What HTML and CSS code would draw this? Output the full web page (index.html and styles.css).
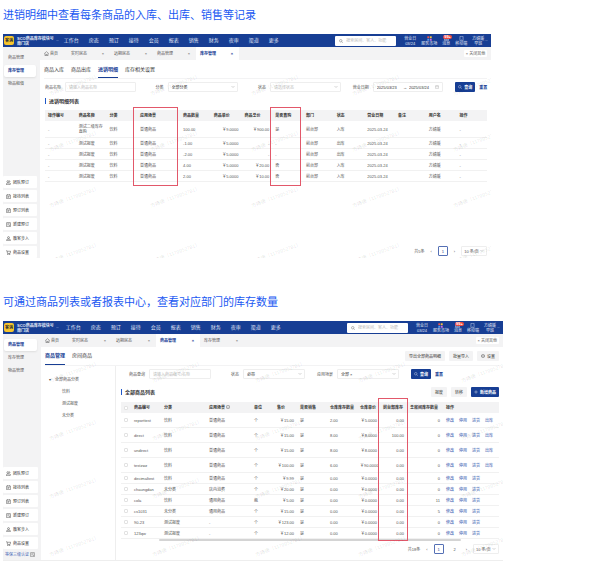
FILE: index.html
```
<!DOCTYPE html>
<html lang="zh-CN">
<head>
    <meta charset="UTF-8">
    <meta name="viewport" content="width=device-width, initial-scale=1.0">
    <title>库存管理</title>
    <link rel="stylesheet" href="styles.css">
</head>
<body>
    <!-- Icons shared by both panels -->
    <svg class="sprite" aria-hidden="true">
        <symbol id="i-search" viewBox="0 0 16 16"><circle cx="7" cy="7" r="5"/><path d="M11 11l4 4"/></symbol>
        <symbol id="i-down" viewBox="0 0 16 16"><path d="M3 6l5 5 5-5"/></symbol>
        <symbol id="i-home" viewBox="0 0 16 16"><path d="M1 8l7-6 7 6M3 7v8h10V7M6 15v-4h4v4"/></symbol>
        <symbol id="i-team" viewBox="0 0 16 16"><circle cx="6" cy="5" r="3"/><path d="M1 15v-3l3-2h4l3 2v3zM10 2l3 2-2 4M12 9l3 3v3"/></symbol>
        <symbol id="i-list" viewBox="0 0 16 16"><path d="M2 3h12v12H2zM5 1v3M11 1v3M5 8h6M5 11h4"/></symbol>
        <symbol id="i-order" viewBox="0 0 16 16"><path d="M2 2h12v13H2zM5 6h6M5 9h3M9 11l2 1 2-3"/></symbol>
        <symbol id="i-user" viewBox="0 0 16 16"><circle cx="8" cy="5" r="3"/><path d="M1 14l3-4h8l3 4z"/></symbol>
        <symbol id="i-cart" viewBox="0 0 16 16"><path d="M1 2h2l2 9h8l2-7H4"/><circle cx="6" cy="14" r="1"/><circle cx="12" cy="14" r="1"/></symbol>
        <symbol id="i-date" viewBox="0 0 16 16"><path d="M2 3h12v11H2zM2 7h12M5 1v3M11 1v3"/></symbol>
        <symbol id="i-mail" viewBox="0 0 16 16"><path d="M1 3h14v11H1zM1 10h4l1 2h4l1-2h4"/></symbol>
        <symbol id="i-phone" viewBox="0 0 16 16"><path d="M3 1h10v14H3zM7 12h2"/></symbol>
        <symbol id="i-gear" viewBox="0 0 16 16"><path d="M8 1l6 3v8l-6 3-6-3V4z"/><circle cx="8" cy="8" r="2"/></symbol>
        <symbol id="i-info" viewBox="0 0 16 16"><circle cx="8" cy="8" r="7"/><path d="M8 7v5M8 4v1"/></symbol>
        <symbol id="i-plus" viewBox="0 0 16 16"><path d="M8 1v14M1 8h14"/></symbol>
        <symbol id="i-apps" viewBox="0 0 16 16"><path class="app-red" d="M1 1h6v6H1z"/><path class="app-yellow" d="M9 1h6v6H9z"/><path class="app-blue" d="M1 9h6v6H1z"/><path class="app-pink" d="M9 9h6v6H9z"/></symbol>
    </svg>

    <h2 class="title">进销明细中查看每条商品的入库、出库、销售等记录</h2>

    <section class="panel panel-stock">
        <header class="topbar">
            <span class="logo">客满</span>
            <span class="store">SCO商品库存模块号<br>南门店</span>
            <svg class="icon store-arrow"><use href="#i-down"/></svg>
            <nav class="menu"></nav>
            <label class="search"><svg class="icon"><use href="#i-search"/></svg><input type="text" aria-label="搜索" placeholder="搜索房间、客人、功能"></label>
            <div class="tools">
                <span class="tool">营业日<br>03/24</span>
                <span class="tool"><svg class="icon apps"><use href="#i-apps"/></svg>服务市场</span>
                <span class="tool"><svg class="icon"><use href="#i-mail"/></svg>消息<b class="badge">99+</b></span>
                <span class="tool"><svg class="icon"><use href="#i-phone"/></svg>移动端</span>
                <span class="tool">方婧媛<br>早班</span>
                <svg class="icon"><use href="#i-down"/></svg>
            </div>
        </header>
        <div class="body">
            <aside class="sidebar">
                <a class="side-link" href="#">商品管理</a>
                <a class="side-link active" href="#">库存管理</a>
                <a class="side-link" href="#">物品租借</a>
                <div class="shortcuts"></div>
            </aside>
            <main class="main">
                <div class="tabs">
                    <a class="home" href="#"><svg class="icon"><use href="#i-home"/></svg>首页</a>
                    <a class="tab" href="#">实时房态<i>×</i></a>
                    <a class="tab" href="#">远期房态<i>×</i></a>
                    <a class="tab" href="#">商品管理<i>×</i></a>
                    <a class="tab active" href="#">库存管理<i>×</i></a>
                    <button class="close-others">× 关闭其他</button>
                </div>
                <div class="subtabs">
                    <a href="#">商品入库</a>
                    <a href="#">商品出库</a>
                    <a class="active" href="#">进销明细</a>
                    <a href="#">库存相关设置</a>
                </div>
                <div class="content">
                    <form class="filters">
                        <label class="field wide">商品名称<input type="text" placeholder="请输入商品名称"></label>
                        <label class="field wide">分类<select><option>全部分类</option></select></label>
                        <label class="field">状态<select class="empty"><option>请选择状态</option></select></label>
                        <div class="field">
                            <label for="dateFrom">营业日期</label>
                            <span class="range">
                                <input type="text" id="dateFrom" value="2025/03/23">
                                <span>→</span>
                                <input type="text" aria-label="结束日期" value="2025/03/24">
                                <svg class="icon"><use href="#i-date"/></svg>
                            </span>
                        </div>
                        <div class="actions">
                            <button type="button" class="btn primary"><svg class="icon"><use href="#i-search"/></svg>查询</button>
                            <button type="reset" class="link">重置</button>
                        </div>
                    </form>
                    <div class="section-head"><h3>进销明细列表</h3></div>
                    <div class="table-wrap">
                        <table class="stock-table">
                            <thead>
                                <tr><th>操作编号</th><th>商品名称</th><th>分类</th><th class="wide">应用场景</th><th>商品数量</th><th>商品单价</th><th>商品总价</th><th>是否直购</th><th>部门</th><th>状态</th><th>营业日期</th><th>备注</th><th>用户名</th><th>操作</th></tr>
                            </thead>
                            <tbody id="stockRows"></tbody>
                        </table>
                        <div class="mark mark-scene"></div>
                        <div class="mark mark-direct"></div>
                    </div>
                    <div class="pager">
                        <span>共5条</span>
                        <button class="arrow">‹</button>
                        <button class="page active">1</button>
                        <button class="arrow">›</button>
                        <select aria-label="每页条数"><option>10 条/页</option></select>
                    </div>
                </div>
            </main>
        </div>
        <div class="watermark" aria-hidden="true"></div>
    </section>

    <h2 class="title">可通过商品列表或者报表中心，查看对应部门的库存数量</h2>

    <section class="panel panel-goods">
        <header class="topbar">
            <span class="logo">客满</span>
            <span class="store">SCO商品库存模块号<br>南门店</span>
            <svg class="icon store-arrow"><use href="#i-down"/></svg>
            <nav class="menu"></nav>
            <label class="search"><svg class="icon"><use href="#i-search"/></svg><input type="text" aria-label="搜索" placeholder="搜索房间、客人、功能"></label>
            <div class="tools">
                <span class="tool">营业日<br>03/24</span>
                <span class="tool"><svg class="icon apps"><use href="#i-apps"/></svg>服务市场</span>
                <span class="tool"><svg class="icon"><use href="#i-mail"/></svg>消息<b class="badge">99+</b></span>
                <span class="tool"><svg class="icon"><use href="#i-phone"/></svg>移动端</span>
                <span class="tool">方婧媛<br>早班</span>
                <svg class="icon"><use href="#i-down"/></svg>
            </div>
        </header>
        <div class="body">
            <aside class="sidebar">
                <a class="side-link active" href="#">商品管理</a>
                <a class="side-link" href="#">库存管理</a>
                <a class="side-link" href="#">物品管理</a>
                <div class="shortcuts"></div>
                <a class="cert" href="#">等保三级认证 <svg class="icon"><use href="#i-order"/></svg></a>
            </aside>
            <main class="main">
                <div class="tabs">
                    <a class="home" href="#"><svg class="icon"><use href="#i-home"/></svg>首页</a>
                    <a class="tab" href="#">实时房态<i>×</i></a>
                    <a class="tab" href="#">远期房态<i>×</i></a>
                    <a class="tab active" href="#">商品管理<i>×</i></a>
                    <a class="tab" href="#">库存管理<i>×</i></a>
                    <button class="close-others">× 关闭其他</button>
                </div>
                <div class="subtabs">
                    <a class="active" href="#">商品管理</a>
                    <a href="#">房间商品</a>
                    <div class="head-actions">
                        <button class="btn">导出全部商品明细</button>
                        <button class="btn">批量导入</button>
                        <button class="btn"><svg class="icon"><use href="#i-gear"/></svg>设置</button>
                    </div>
                </div>
                <div class="split">
                    <ul class="tree">
                        <li class="root">全部商品分类</li>
                        <li>饮料</li>
                        <li>测试报废</li>
                        <li>未分类</li>
                    </ul>
                    <div class="content">
                        <form class="filters">
                            <label class="field wide">商品查询<input type="text" placeholder="请输入商品编号/名称"></label>
                            <label class="field">状态<select><option>必带</option></select></label>
                            <label class="field">应用场景<select><option>全部 ×</option></select></label>
                            <div class="actions">
                                <button type="button" class="btn primary"><svg class="icon"><use href="#i-search"/></svg>查询</button>
                                <button type="reset" class="link">重置</button>
                            </div>
                        </form>
                        <div class="section-head">
                            <h3>全部商品列表</h3>
                            <button class="btn">报废</button>
                            <button class="btn">转移</button>
                            <button class="btn primary"><svg class="icon"><use href="#i-plus"/></svg>新增商品</button>
                        </div>
                        <div class="table-wrap">
                            <table class="goods-table">
                                <colgroup><col class="c-check"><col class="c-code"><col class="c-type"><col class="c-type"><col class="c-unit"><col class="c-unit"><col class="c-code"><col class="c-code"><col class="c-unit"><col class="c-dept"><col class="c-room"><col></colgroup>
                                <thead>
                                    <tr><th><input type="checkbox" aria-label="全选"></th><th>商品编号</th><th>分类</th><th>应用场景 <svg class="icon"><use href="#i-info"/></svg></th><th>单位</th><th>售价</th><th>是否销售</th><th>仓库库存数量</th><th>仓库单价</th><th>前台部库存</th><th>总房间库存数量</th><th>操作</th></tr>
                                </thead>
                                <tbody id="goodsRows"></tbody>
                            </table>
                            <div class="scrollbar"></div>
                            <div class="mark mark-dept"></div>
                        </div>
                        <div class="pager">
                            <span>共18条</span>
                            <button class="arrow">‹</button>
                            <button class="page active">1</button>
                            <button class="page">2</button>
                            <button class="arrow">›</button>
                            <select aria-label="每页条数"><option>10 条/页</option></select>
                        </div>
                    </div>
                </div>
            </main>
        </div>
        <div class="watermark" aria-hidden="true"></div>
    </section>

    <script>
        const menu = ['工作台', '房态', '预订', '接待', '会员', '报表', '销售', '财务', '夜审', '渠道', '更多'];

        const shortcuts = [
            ['i-team', '团队预订'],
            ['i-list', '接待列表'],
            ['i-list', '预订列表'],
            ['i-order', '新建预订'],
            ['i-user', '散客步入'],
            ['i-cart', '商品设置']
        ];

        const stock = [
            ['-', '测试二级库存直购', '饮料', '普通商品', '100.00', '￥9.0000', '￥900.00', '是', '前台部', '入库'],
            ['-', '测试报废', '饮料', '普通商品', '-1.00', '￥5.0000', '-', '-', '前台部', '出库'],
            ['-', '测试报废', '饮料', '普通商品', '-2.00', '￥5.0000', '-', '-', '前台部', '出库'],
            ['-', '测试报废', '饮料', '普通商品', '4.00', '￥5.0000', '￥20.00', '否', '前台部', '入库'],
            ['-', '测试报废', '饮料', '普通商品', '2.00', '￥5.0000', '￥10.00', '否', '前台部', '入库']
        ];

        const goods = [
            ['reporttest', '饮料', '普通商品', '个', '￥15.00', '是', '2.00', '￥5.0000', '0.00', '0'],
            ['direct', '饮料', '普通商品', '个', '￥15.00', '是', '8.00', '￥8.0000', '100.00', '0'],
            ['undirect', '饮料', '普通商品', '个', '￥15.00', '是', '8.00', '￥8.0000', '0.00', '0'],
            ['testzwz', '饮料', '普通商品', '个', '￥100.00', '是', '6.00', '￥90.0000', '0.00', '0'],
            ['decimaltest', '饮料', '普通商品', '个', '￥9.99', '是', '0.00', '￥0.0000', '0.00', '0'],
            ['chaungdan', '未分类', '店内消费', '个', '￥20.00', '是', '0.00', '￥0.0000', '0.00', '0'],
            ['cola', '饮料', '通用商品', '瓶', '￥5.00', '是', '0.00', '￥0.0000', '0.00', '11'],
            ['cs1031', '未分类', '通用商品', '个', '￥15.00', '是', '0.00', '￥0.0000', '0.00', '5'],
            ['90-23', '测试报废', '-', '个', '￥123.00', '是', '0.00', '￥0.0000', '0.00', '0'],
            ['123qw', '测试报废', '-', '个', '￥12.00', '是', '0.00', '￥0.0000', '0.00', '0']
        ];

        const cells = (row, right) => row.map((v, i) => `<td${right.includes(i) ? ' class="num"' : ''}>${v}</td>`).join('');

        document.querySelectorAll('.menu').forEach(el => {
            el.innerHTML = menu.map(m => `<a href="#">${m}</a>`).join('');
        });

        document.querySelectorAll('.shortcuts').forEach(el => {
            el.innerHTML = shortcuts.map(([icon, name]) =>
                `<a href="#"><svg class="icon"><use href="#${icon}"/></svg>${name}</a>`).join('');
        });

        document.querySelectorAll('.watermark').forEach(el => {
            el.innerHTML = '<span>方婧媛（1179952781）</span>'.repeat(20);
        });

        document.getElementById('stockRows').innerHTML = stock.map(row =>
            `<tr>${cells([...row, '2025-03-24', '', '方婧媛', '-'], [5, 6])}</tr>`).join('');

        // The first four goods can also be taken out of stock
        document.getElementById('goodsRows').innerHTML = goods.map((row, i) => {
            const links = ['修改', '停用', '进货'].concat(i < 4 ? ['出库'] : []);
            return `<tr${i < 4 ? ' class="tall"' : ''}><td><input type="checkbox" aria-label="${row[0]}"></td>` +
                cells(row, [4, 7, 8, 9]) +
                `<td><div class="ops">${links.map(l => `<a href="#">${l}</a>`).join('')}</div></td></tr>`;
        }).join('');
    </script>
</body>
</html>
```
FILE: styles.css
```
* {
    box-sizing: border-box;
}

body {
    margin: 0;
    padding: 8px 3px 0;
    background: #fff;
    color: #555;
    font: 4px/5px "Liberation Sans", "Noto Sans CJK SC", sans-serif;
}

a {
    color: inherit;
    text-decoration: none;
}

button,
input,
select {
    margin: 0;
    padding: 0;
    border: 0;
    background: none;
    color: inherit;
    font: inherit;
    min-width: 0;
}

.sprite {
    display: none;
}

.icon {
    width: 5px;
    height: 5px;
    flex: none;
    fill: none;
    stroke: currentColor;
    stroke-width: 1.5;
    vertical-align: top;
}

.title {
    margin: 0 0 12px;
    color: #1b59f2;
    font-size: 11px;
    line-height: 14px;
    font-weight: 400;
}

.panel {
    position: relative;
    display: flex;
    flex-direction: column;
    overflow: hidden;
}

.panel-stock {
    width: 82.6%;
    min-height: 224px;
    margin-bottom: 37px;
}

.panel-goods {
    width: 84.6%;
    min-height: 240px;
    border-bottom: 1px solid #eee;
}

/* Top bar */
.topbar {
    display: flex;
    align-items: center;
    height: 13px;
    padding: 0 3px 0 1px;
    background: #173e94;
    color: #e3e9f6;
}

.logo {
    width: 10px;
    height: 9px;
    margin-right: 3px;
    border-radius: 2px;
    background: #f7c52c;
    color: #333;
    font-weight: 700;
    line-height: 9px;
    text-align: center;
}

.store {
    white-space: nowrap;
    font-weight: 700;
}

.store-arrow {
    width: 3px;
    height: 3px;
    margin: 0 5px 0 2px;
}

.menu {
    display: flex;
    gap: 10px;
    font-size: 5px;
    white-space: nowrap;
}

.panel-goods .store-arrow {
    margin-right: 7px;
}

.search {
    display: flex;
    align-items: center;
    gap: 3px;
    width: 61px;
    height: 10px;
    margin-left: auto;
    padding: 0 4px;
    border-radius: 1px;
    background: #fff;
    color: #444;
}

.search .icon {
    width: 4px;
    height: 4px;
}

.search input {
    flex: 1;
}

::placeholder {
    color: #bbb;
    opacity: 1;
}

.tools {
    display: flex;
    align-items: center;
    gap: 5px;
    margin-left: 8px;
    white-space: nowrap;
}

.tools > .icon {
    width: 3px;
    height: 3px;
    margin-left: -4px;
}

.tool {
    position: relative;
    display: block;
    text-align: center;
}

.tool .icon {
    display: block;
    margin: 0 auto;
}

.apps {
    stroke: none;
}

.app-red { fill: #f0524b; }
.app-yellow { fill: #f8c53a; }
.app-blue { fill: #4c9cf5; }
.app-pink { fill: #d36be0; }

.badge {
    position: absolute;
    top: -1px;
    left: 1px;
    padding: 0 1px;
    border-radius: 2px;
    background: #f0483e;
    color: #fff;
    line-height: 4px;
}

/* Sidebar */
.body {
    display: flex;
    flex: 1;
}

.sidebar {
    display: flex;
    flex-direction: column;
    flex: none;
    width: 37px;
    padding-top: 5px;
    background: #f3f3f4;
}

.panel-goods .sidebar {
    width: 38px;
}

.side-link {
    margin: 0 4px 1px 1px;
    padding: 3px 0 4px 4px;
    border-radius: 2px;
}

.side-link.active {
    background: #fff;
    color: #173e94;
    font-weight: 700;
    box-shadow: 0 1px 2px #ddd;
}

.shortcuts {
    display: flex;
    flex-direction: column;
    gap: 2px;
    margin-top: auto;
}

.shortcuts a {
    display: flex;
    align-items: center;
    gap: 2px;
    height: 12px;
    margin-right: 3px;
    padding-left: 3px;
    border-radius: 1px;
    background: #fff;
    color: #333;
}

.cert {
    padding: 3px 2px 3px;
    color: #3d62b5;
    white-space: nowrap;
}

.cert .icon {
    color: #555;
}

/* Tabs */
.main {
    display: flex;
    flex-direction: column;
    flex: 1;
    min-width: 0;
}

.tabs {
    display: flex;
    align-items: stretch;
    height: 13px;
    padding-right: 4px;
    background: #f3f3f4;
}

.home {
    display: flex;
    align-items: center;
    gap: 1px;
    width: 27px;
    padding-left: 4px;
}

.tab {
    display: flex;
    align-items: center;
    justify-content: space-between;
    width: 43px;
    padding: 0 6px 0 4px;
}

.panel-goods .tab {
    width: 44px;
}

.tab i {
    font-style: normal;
}

.tab.active {
    background: #fff;
    color: #173e94;
    font-weight: 700;
}

.close-others {
    align-self: center;
    margin-left: auto;
    padding: 1px 2px;
    border-radius: 1px;
    background: #fff;
}

.subtabs {
    display: flex;
    align-items: stretch;
    gap: 7px;
    height: 19px;
    margin: 0 4px;
    border-bottom: 1px solid #f3f3f4;
    color: #333;
    font-size: 5px;
}

.subtabs a {
    padding-top: 7px;
}

.subtabs a.active {
    border-bottom: 1px solid #173e94;
    color: #173e94;
    font-weight: 700;
}

.panel-goods .subtabs a {
    padding-top: 6px;
}

.head-actions {
    display: flex;
    align-items: center;
    gap: 4px;
    margin-left: auto;
    font-size: 4px;
}

/* Content */
.content {
    display: flex;
    flex-direction: column;
    flex: 1;
    min-width: 0;
    padding: 3px 4px 2px 5px;
}

.filters {
    display: flex;
    align-items: center;
    gap: 12px;
}

.panel-goods .filters {
    padding: 0 56px 0 8px;
}

.field {
    display: flex;
    align-items: center;
    gap: 4px;
    flex: 1 1 auto;
    white-space: nowrap;
}

.field.wide {
    margin-right: 8px;
}

.field > input,
.field > select,
.range {
    flex: 1 1 0;
    width: 60px;
    height: 10px;
    padding: 0 3px;
    border: 1px solid #eee;
    border-radius: 1px;
    color: #333;
}

select {
    appearance: none;
    background: url("data:image/svg+xml,%3Csvg xmlns='http://www.w3.org/2000/svg' viewBox='0 0 8 8'%3E%3Cpath d='M1 2l3 3 3-3' fill='none' stroke='%23aaa'/%3E%3C/svg%3E") no-repeat right 2px center / 4px 4px;
}

.field > select.empty {
    color: #bbb;
}

.range {
    display: flex;
    align-items: center;
    gap: 2px;
}

.range input {
    flex: 1;
    width: 20px;
}

.range .icon {
    color: #aaa;
    width: 4px;
    height: 4px;
}

.actions {
    display: flex;
    gap: 4px;
}

.btn {
    display: flex;
    align-items: center;
    justify-content: center;
    gap: 2px;
    height: 10px;
    padding: 0 4px;
    border-radius: 1px;
    background: #f3f3f4;
    color: #333;
    white-space: nowrap;
}

.btn .icon {
    width: 4px;
    height: 4px;
}

.btn.primary {
    padding: 0 3px;
    background: #173e94;
    color: #fff;
    font-weight: 700;
}

.link {
    color: #173e94;
    font-weight: 700;
}

.section-head {
    display: flex;
    align-items: center;
    gap: 4px;
    min-height: 18px;
}

.panel-goods .section-head {
    min-height: 23px;
    padding-top: 3px;
}

.section-head h3 {
    margin: 0 auto 0 0;
    padding-left: 3px;
    border-left: 1px solid #1f57c8;
    color: #333;
    font-size: 5px;
    line-height: 6px;
    font-weight: 700;
}

/* Tables */
.table-wrap {
    position: relative;
}

table {
    width: 100%;
    table-layout: fixed;
    border-collapse: separate;
    border-spacing: 0;
}

th,
td {
    height: 11px;
    padding: 0 3px;
    text-align: left;
    vertical-align: middle;
}

th {
    background: #f3f3f4;
    color: #333;
    font-weight: 700;
    white-space: nowrap;
}

td {
    border-bottom: 1px solid #f1f1f1;
}

.stock-table .wide {
    width: 43px;
}

.stock-table tbody tr:first-child td {
    height: 17px;
}

.tall td {
    height: 15px;
}

.num {
    text-align: right;
}

th .icon {
    width: 4px;
    height: 4px;
}

.c-check { width: 10px; }
.c-code { width: 30px; }
.c-type { width: 45px; }
.c-unit { width: 23px; }
.c-dept { width: 27px; }
.c-room { width: 36px; }

input[type="checkbox"] {
    appearance: none;
    display: block;
    width: 4px;
    height: 4px;
    border: 1px solid #e2e2e2;
    border-radius: 1px;
    background: #fff;
}

.ops {
    display: flex;
    gap: 5px;
    color: #2f55ae;
}

.scrollbar {
    height: 2px;
    margin: 0 10% 0 10%;
    border-radius: 1px;
    background: #d4d4d4;
}

/* Highlight frames drawn over the columns */
.mark {
    position: absolute;
    border: 1px solid #e2586a;
}

.mark-scene,
.mark-direct {
    top: -3px;
    bottom: -4px;
}

.mark-scene {
    left: 20%;
    width: 10%;
}

.mark-direct {
    left: 51%;
    width: 7%;
}

.mark-dept {
    top: -4px;
    bottom: 0;
    left: 68%;
    width: 8%;
}

/* Pager */
.pager {
    display: flex;
    align-items: center;
    justify-content: flex-end;
    gap: 6px;
    margin-top: auto;
}

.panel-goods .pager {
    margin-bottom: 4px;
}

.page {
    width: 10px;
    height: 10px;
    border-radius: 1px;
}

.page.active {
    border: 1px solid #5570b5;
    color: #173e94;
}

.pager select {
    width: 26px;
    height: 10px;
    padding: 0 7px 0 2px;
    border: 1px solid #eee;
    border-radius: 1px;
}

/* Category tree */
.split {
    display: flex;
    flex: 1;
}

.tree {
    flex: none;
    width: 75px;
    margin: 0;
    padding: 8px 0 0;
    border-right: 1px solid #eee;
    list-style: none;
}

.tree li {
    padding: 3px 0 4px 21px;
}

.tree .root {
    padding-left: 8px;
}

.tree .root::before {
    content: "▾";
    display: inline-block;
    width: 6px;
}

/* Watermark */
.watermark {
    position: absolute;
    inset: 49px 0 0 45px;
    display: grid;
    grid-template-columns: repeat(5, 101px);
    grid-auto-rows: 56px;
    color: rgba(0, 0, 0, 0.13);
    font-size: 5px;
    white-space: nowrap;
    pointer-events: none;
}

.watermark span {
    width: 50px;
    height: 5px;
    transform: rotate(-20deg);
}

.panel-goods .watermark {
    grid-template-columns: repeat(5, 103px);
    grid-auto-rows: 58px;
}
```
